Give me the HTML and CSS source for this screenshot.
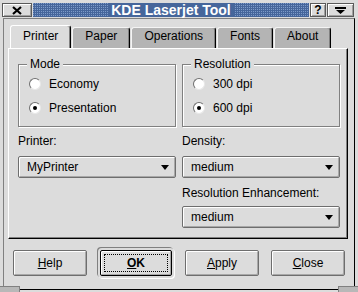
FILE: index.html
```html
<!DOCTYPE html>
<html lang="en">
  <head>
    <meta charset="UTF-8" />
    <title>KDE Laserjet Tool</title>
    <link rel="stylesheet" href="styles.css">
  </head>
  <body>
    <div class="titlebar">
      <span class="tb-button tb-close">
        <svg width="10" height="9" viewBox="0 0 10 9">
          <path d="M1 1 L9 8 M9 1 L1 8" stroke="#000" stroke-width="2.2" />
        </svg>
      </span>
      <div class="tb-caption"><span class="tb-text">KDE Laserjet Tool</span></div>
      <span class="tb-button tb-help">?</span>
      <span class="tb-button tb-menu">
        <svg width="11" height="7" viewBox="0 0 11 7">
          <rect x="0" y="0" width="11" height="2" fill="#000" />
          <path d="M1 3 L10 3 L5.5 7 Z" fill="#000" />
        </svg>
      </span>
    </div>

    <div class="client">
      <div class="tabs">
        <div class="tab active">Printer</div>
        <div class="tab">Paper</div>
        <div class="tab">Operations</div>
        <div class="tab">Fonts</div>
        <div class="tab">About</div>
      </div>

      <div class="panel">
        <div class="col">
          <div class="group">
            <div class="group-title">Mode</div>
            <div class="radio-row"><span class="radio"></span>Economy</div>
            <div class="radio-row"><span class="radio checked"></span>Presentation</div>
          </div>
          <div class="field-label">Printer:</div>
          <div class="combo"><span>MyPrinter</span><span class="arrow"></span></div>
        </div>
        <div class="col">
          <div class="group">
            <div class="group-title">Resolution</div>
            <div class="radio-row"><span class="radio"></span>300 dpi</div>
            <div class="radio-row"><span class="radio checked"></span>600 dpi</div>
          </div>
          <div class="field-label">Density:</div>
          <div class="combo"><span>medium</span><span class="arrow"></span></div>
          <div class="field-label second">Resolution Enhancement:</div>
          <div class="combo second"><span>medium</span><span class="arrow"></span></div>
        </div>
      </div>

      <div class="buttons">
        <button class="btn"><u>H</u>elp</button>
        <button class="btn default"><span class="focus"><u>O</u>K</span></button>
        <button class="btn"><u>A</u>pply</button>
        <button class="btn"><u>C</u>lose</button>
      </div>
    </div>
    <div class="grip left"></div>
    <div class="grip right"></div>
  </body>
</html>
```

FILE: styles.css
```css
body {
  margin: 0;
  width: 358px;
  height: 292px;
  overflow: hidden;
  position: relative;
  background-color: #dcdcdc;
  font-family: "Liberation Sans", Arial, sans-serif;
  font-size: 12px;
  color: #000;
}
.titlebar {
  display: flex;
  height: 14px;
  margin: 3px 4px 0 2px;
}
.tb-button {
  box-sizing: border-box;
  height: 14px;
  display: flex;
  align-items: center;
  justify-content: center;
  background-color: #dcdcdc;
  border: 1px solid #5a5a5a;
  box-shadow: inset 1px 1px 0 #fff, inset -1px -1px 0 #a0a0a0;
}
.tb-close {
  width: 30px;
}
.tb-help {
  width: 16px;
  margin-left: 1px;
  font-weight: bold;
  font-size: 12px;
  line-height: 12px;
}
.tb-menu {
  width: 27px;
  margin-left: 1px;
}
.tb-caption {
  flex: 1;
  margin-left: 1px;
  display: flex;
  align-items: center;
  justify-content: center;
  background-color: #7d9bc9;
  background-image: linear-gradient(90deg, transparent 50%, #46669b 50%),
    linear-gradient(transparent 50%, #46669b 50%);
  background-size: 2px 2px;
}
.tb-text {
  background-color: #46669b;
  color: #fff;
  font-weight: bold;
  font-size: 14px;
  line-height: 14px;
  padding: 0 3px;
}
.client {
  box-sizing: border-box;
  height: 272px;
  margin: 1px 3px 0 3px;
  border: 1px solid;
  border-color: #808080 #000 #000 #808080;
}
.tabs {
  display: flex;
  align-items: flex-end;
  height: 23px;
  margin: 6px 0 0 6px;
}
.tab {
  box-sizing: border-box;
  height: 21px;
  padding: 0 12px 4px;
  margin-right: 1px;
  line-height: 16px;
  background-color: #b4b4b4;
  border: 1px solid;
  border-bottom: none;
  border-color: #f4f4f4 #000 transparent #f4f4f4;
  border-radius: 3px 3px 0 0;
  box-shadow: inset -1px 0 0 #808080;
}
.tab.active {
  position: relative;
  height: 23px;
  padding-top: 2px;
  background-color: #dcdcdc;
  border-color: #fff #000 transparent #fff;
}
.panel {
  box-sizing: border-box;
  height: 191px;
  margin: 0 6px 0 4px;
  padding: 15px 7px 0 9px;
  display: grid;
  grid-template-columns: 158px 158px;
  column-gap: 6px;
  align-items: start;
  border: 1px solid;
  border-color: #fff #000 #000 #fff;
  box-shadow: inset -1px -1px 0 #808080;
}
.col {
  display: flex;
  flex-direction: column;
}
.group {
  box-sizing: border-box;
  height: 63px;
  border: 1px solid #808080;
  box-shadow: inset 1px 1px 0 #fff, 1px 1px 0 #fff;
  padding-left: 10px;
}
.group-title {
  width: fit-content;
  margin: -8px 0 1px -2px;
  padding: 0 3px;
  line-height: 14px;
  background-color: #dcdcdc;
}
.radio-row {
  display: flex;
  align-items: center;
  height: 24px;
}
.radio {
  box-sizing: border-box;
  width: 12px;
  height: 12px;
  margin-right: 8px;
  border-radius: 50%;
  background-color: #fff;
  border: 1px solid;
  border-color: #707070 #e8e8e8 #e8e8e8 #707070;
  display: flex;
  align-items: center;
  justify-content: center;
}
.radio.checked::after {
  content: "";
  width: 4px;
  height: 4px;
  border-radius: 50%;
  background-color: #000;
}
.field-label {
  margin-top: 6px;
  line-height: 16px;
}
.field-label.second {
  margin-top: 7px;
}
.combo {
  box-sizing: border-box;
  height: 22px;
  margin-top: 7px;
  padding: 0 6px 0 8px;
  display: flex;
  align-items: center;
  justify-content: space-between;
  background-color: #dcdcdc;
  border: 1px solid #6e6e6e;
  border-radius: 2px;
  box-shadow: inset 1px 1px 0 #fff, inset -1px -1px 0 #a8a8a8;
}
.combo.second {
  margin-top: 5px;
}
.arrow {
  width: 0;
  height: 0;
  border-left: 4px solid transparent;
  border-right: 4px solid transparent;
  border-top: 5px solid #000;
}
.buttons {
  display: flex;
  gap: 12px;
  margin-top: 11px;
  padding-left: 9px;
}
.btn {
  box-sizing: border-box;
  width: 74px;
  height: 26px;
  padding: 0;
  font-family: "Liberation Sans", Arial, sans-serif;
  font-size: 12px;
  color: #000;
  background-color: #dcdcdc;
  border: 1px solid #6e6e6e;
  border-radius: 2px;
  box-shadow: inset 1px 1px 0 #fff, inset -1px -1px 0 #a8a8a8;
}
.btn.default {
  width: 72px;
  margin: 0 1px;
  font-weight: bold;
  padding: 3px;
  border-color: #000;
  box-shadow: inset 1px 1px 0 #fff, inset -1px -1px 0 #a8a8a8,
    0 0 0 2px #dcdcdc, -1px -1px 0 2px #808080, 1px 1px 0 2px #fff;
}
.focus {
  display: flex;
  height: 100%;
  box-sizing: border-box;
  align-items: center;
  justify-content: center;
  border: 1px dotted #000;
}
.grip {
  position: absolute;
  bottom: 0;
  width: 20px;
  height: 6px;
  box-sizing: border-box;
  background-color: #b8b8b8;
  border-top: 1px solid #808080;
}
.grip.left {
  left: 0;
  border-right: 1px solid #808080;
}
.grip.right {
  right: 0;
  border-left: 1px solid #808080;
}
```
